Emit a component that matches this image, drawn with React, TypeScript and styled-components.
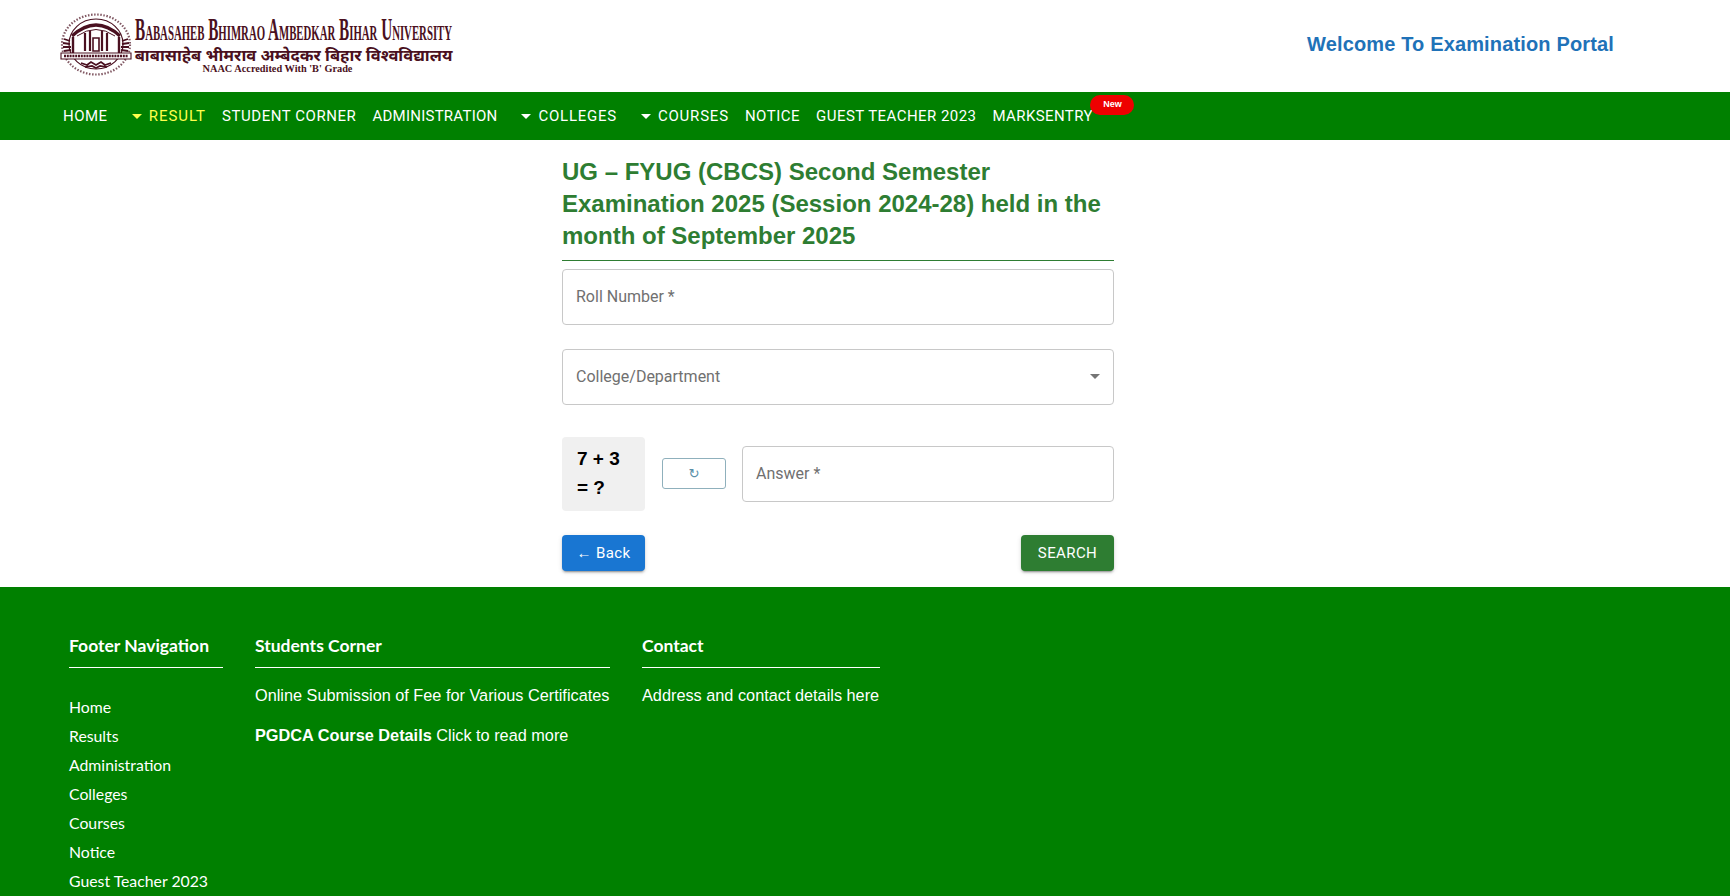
import styled, { createGlobalStyle } from "styled-components";

const GlobalStyle = createGlobalStyle`
  html, body {
    margin: 0;
    padding: 0;
    background: #fff;
    overflow: hidden;
  }
  body {
    font-family: "Roboto", "Liberation Sans", sans-serif;
  }
  * {
    box-sizing: border-box;
  }
`;

const Page = styled.div`
  width: 1730px;
  height: 896px;
  overflow: hidden;
`;

const Header = styled.header`
  height: 92px;
  display: flex;
  align-items: center;
  justify-content: space-between;
  padding: 0 116px 0 60px;
`;

const Logo = styled.div`
  display: flex;
  align-items: flex-start;
  gap: 3px;
  color: #4a1020;
  margin-top: -4px;
`;

const LogoText = styled.div`
  display: flex;
  flex-direction: column;
  align-items: center;
  width: 317px;
  padding-top: 4px;
`;

const LogoName = styled.div`
  font-family: "Liberation Serif", serif;
  font-size: 31px;
  line-height: 28px;
  font-weight: 700;
  font-variant: small-caps;
  white-space: nowrap;
  transform: scaleX(0.49);
`;

const LogoHindi = styled.div`
  margin-top: 1px;
  font-family: "Noto Sans", "DejaVu Sans", sans-serif;
  font-size: 16.5px;
  line-height: 20px;
  font-weight: 700;
  white-space: nowrap;
`;

const LogoGrade = styled.div`
  margin: -1px 32px 0 0;
  font-family: "Liberation Serif", serif;
  font-size: 10.3px;
  line-height: 10px;
  font-weight: 700;
`;

const Welcome = styled.div`
  font-family: "Liberation Sans", sans-serif;
  font-size: 20px;
  letter-spacing: 0.15px;
  font-weight: 700;
  color: #1f72b8;
  margin-top: -3px;
`;

const Nav = styled.nav`
  height: 48px;
  background: #008000;
  display: flex;
  align-items: center;
  gap: 16px;
  padding-left: 63px;
`;

const NavItem = styled.a<{ $active?: boolean; $caret?: boolean; $tracking: number }>`
  position: relative;
  display: flex;
  align-items: center;
  gap: 7px;
  padding-left: ${(p) => (p.$caret ? "8px" : "0")};
  font-size: 15px;
  letter-spacing: ${(p) => p.$tracking}px;
  white-space: nowrap;
  color: ${(p) => (p.$active ? "#ffff4d" : "#fff")};
`;

const Caret = styled.span`
  width: 0;
  height: 0;
  border-left: 5px solid transparent;
  border-right: 5px solid transparent;
  border-top: 5px solid currentColor;
`;

const NewBadge = styled.span`
  position: absolute;
  left: 98px;
  top: -12px;
  width: 44px;
  height: 20px;
  border-radius: 10px;
  background: #ee0000;
  color: #fff;
  font-family: "Liberation Sans", sans-serif;
  font-size: 9px;
  letter-spacing: 0;
  font-weight: 700;
  text-align: center;
  line-height: 18px;
`;

const Main = styled.main`
  height: 447px;
  padding: 16px 0 0 562px;
`;

const FormColumn = styled.div`
  width: 552px;
  display: flex;
  flex-direction: column;
`;

const Title = styled.h2`
  margin: 0;
  padding-bottom: 8px;
  border-bottom: 1px solid #2e7d32;
  font-family: "Liberation Sans", sans-serif;
  font-size: 24px;
  line-height: 32px;
  font-weight: 700;
  color: #2e7d32;
`;

const Field = styled.div<{ $grow?: boolean }>`
  height: 56px;
  flex: ${(p) => (p.$grow ? 1 : "none")};
  display: flex;
  align-items: center;
  justify-content: space-between;
  padding: 0 14px 2px 13px;
  border: 1px solid #c8c8c8;
  border-radius: 4px;
  font-size: 16px;
  color: #707070;
`;

const RollField = styled(Field)`
  margin-top: 8px;
`;

const SelectField = styled(Field)`
  margin-top: 24px;
`;

const SelectCaret = styled(Caret)`
  color: #757575;
  margin-right: -1px;
`;

const CaptchaRow = styled.div`
  display: flex;
  align-items: center;
  margin-top: 32px;
`;

const CaptchaBox = styled.div`
  width: 83px;
  height: 74px;
  padding: 7px 15px;
  background: #f0f0f0;
  border-radius: 4px;
  font-family: "Liberation Sans", sans-serif;
  font-size: 19px;
  line-height: 29px;
  font-weight: 700;
  color: #000;
`;

const RefreshButton = styled.button`
  width: 64px;
  height: 31px;
  margin: -1px 16px 0 17px;
  padding: 0;
  background: #fff;
  border: 1px solid #8fb0bc;
  border-radius: 3px;
  font-family: "DejaVu Sans", sans-serif;
  font-size: 13px;
  color: #5b8fa8;
`;

const ButtonRow = styled.div`
  display: flex;
  justify-content: space-between;
  margin-top: 24px;
`;

const ActionButton = styled.button<{ $bg: string; $width: number }>`
  width: ${(p) => p.$width}px;
  height: 36px;
  padding: 0;
  border: 0;
  border-radius: 4px;
  background: ${(p) => p.$bg};
  color: #fff;
  font-family: "Roboto", sans-serif;
  font-size: 15px;
  letter-spacing: 0.4px;
  box-shadow: 0 3px 1px -2px rgba(0, 0, 0, 0.2), 0 2px 2px 0 rgba(0, 0, 0, 0.14),
    0 1px 5px 0 rgba(0, 0, 0, 0.12);
`;

const Footer = styled.footer`
  height: 309px;
  background: #008000;
  color: #fff;
  display: flex;
  padding: 48px 0 0 69px;
`;

const FooterColumn = styled.div<{ $width: number; $gap: number }>`
  width: ${(p) => p.$width}px;
  margin-right: ${(p) => p.$gap}px;
`;

const FooterHeading = styled.h4`
  margin: 0;
  height: 33px;
  border-bottom: 1px solid #fff;
  font-family: "Lato", sans-serif;
  font-size: 17.5px;
  line-height: 22px;
  font-weight: 700;
  white-space: nowrap;
`;

const FooterList = styled.ul`
  list-style: none;
  margin: 24px 0 0;
  padding: 0;
  font-family: "Lato", sans-serif;
  font-size: 15.8px;
  line-height: 29px;
`;

const FooterText = styled.p`
  margin: 16px 0 0;
  font-family: "Liberation Sans", sans-serif;
  font-size: 16.3px;
  line-height: 22px;
  white-space: nowrap;
`;

const SecondText = styled(FooterText)`
  margin-top: 18px;
`;

const navItems = [
  { label: "HOME", tracking: 0.5 },
  { label: "RESULT", tracking: 1, caret: true, active: true },
  { label: "STUDENT CORNER", tracking: 0.55 },
  { label: "ADMINISTRATION", tracking: 0.25 },
  { label: "COLLEGES", tracking: 0.75, caret: true },
  { label: "COURSES", tracking: 0.8, caret: true },
  { label: "NOTICE", tracking: 0.5 },
  { label: "GUEST TEACHER 2023", tracking: 0.45 },
  { label: "MARKSENTRY", tracking: 0.4, badge: true },
];

const footerLinks = [
  "Home",
  "Results",
  "Administration",
  "Colleges",
  "Courses",
  "Notice",
  "Guest Teacher 2023",
];

// university seal, rough redraw of the emblem in the logo
function Seal() {
  return (
    <svg width="72" height="65" viewBox="0 0 72 65" fill="none" stroke="#4a1020">
      <ellipse cx="36" cy="32.5" rx="34" ry="30" strokeWidth="2.2" strokeDasharray="1.5 1.6" opacity="0.7" />
      <ellipse cx="36" cy="32" rx="27" ry="25" strokeWidth="1.2" />
      <path d="M12 24Q36 2 60 24" strokeWidth="3.2" />
      <path d="M17 24Q36 11 55 24" strokeWidth="1" />
      <path d="M25 21v18M30 19v20M42 19v20M47 21v18" strokeWidth="2.2" />
      <path d="M33 26h6v13h-6z" strokeWidth="1.6" />
      <path d="M4 27l6 2M3 31l7 1M3 35l8 0M4 39l7-1M68 27l-6 2M69 31l-7 1M69 35l-8 0M68 39l-7-1" strokeWidth="1.8" />
      <path d="M13 25v16M59 25v16" strokeWidth="2.4" />
      <path d="M1 41h70v6H1z" fill="#fff" strokeWidth="1.1" />
      <path d="M4 44h64" strokeWidth="2.6" strokeDasharray="2 0.8" />
      <path d="M21 51l6 2 4-3 5 3 5-3 4 3 6-2M25 55l7-1 4 2 4-2 7 1" strokeWidth="1.7" />
    </svg>
  );
}

function App() {
  return (
    <Page>
      <GlobalStyle />
      <Header>
        <Logo>
          <Seal />
          <LogoText>
            <LogoName>Babasaheb Bhimrao Ambedkar Bihar University</LogoName>
            <LogoHindi>बाबासाहेब भीमराव अम्बेदकर बिहार विश्वविद्यालय</LogoHindi>
            <LogoGrade>NAAC Accredited With 'B' Grade</LogoGrade>
          </LogoText>
        </Logo>
        <Welcome>Welcome To Examination Portal</Welcome>
      </Header>
      <Nav>
        {navItems.map((item) => (
          <NavItem
            key={item.label}
            $caret={item.caret}
            $active={item.active}
            $tracking={item.tracking}
          >
            {item.caret && <Caret />}
            {item.label}
            {item.badge && <NewBadge>New</NewBadge>}
          </NavItem>
        ))}
      </Nav>
      <Main>
        <FormColumn>
          <Title>
            UG – FYUG (CBCS) Second Semester Examination 2025 (Session 2024-28)
            held in the month of September 2025
          </Title>
          <RollField>Roll Number *</RollField>
          <SelectField>
            College/Department
            <SelectCaret />
          </SelectField>
          <CaptchaRow>
            <CaptchaBox>7 + 3 = ?</CaptchaBox>
            <RefreshButton>↻</RefreshButton>
            <Field $grow>Answer *</Field>
          </CaptchaRow>
          <ButtonRow>
            <ActionButton $bg="#1976d2" $width={83}>← Back</ActionButton>
            <ActionButton $bg="#2e7d32" $width={93}>SEARCH</ActionButton>
          </ButtonRow>
        </FormColumn>
      </Main>
      <Footer>
        <FooterColumn $width={154} $gap={32}>
          <FooterHeading>Footer Navigation</FooterHeading>
          <FooterList>
            {footerLinks.map((link) => (
              <li key={link}>{link}</li>
            ))}
          </FooterList>
        </FooterColumn>
        <FooterColumn $width={355} $gap={32}>
          <FooterHeading>Students Corner</FooterHeading>
          <FooterText>Online Submission of Fee for Various Certificates</FooterText>
          <SecondText>
            <b>PGDCA Course Details</b> Click to read more
          </SecondText>
        </FooterColumn>
        <FooterColumn $width={238} $gap={0}>
          <FooterHeading>Contact</FooterHeading>
          <FooterText>Address and contact details here</FooterText>
        </FooterColumn>
      </Footer>
    </Page>
  );
}

export default App;
